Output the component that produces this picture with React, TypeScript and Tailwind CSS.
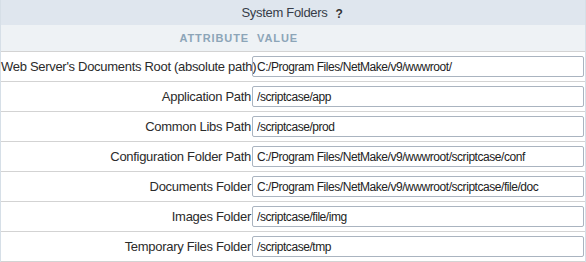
import React from 'react';

const folders = [
  { label: "Web Server's Documents Root (absolute path)", value: 'C:/Program Files/NetMake/v9/wwwroot/' },
  { label: 'Application Path', value: '/scriptcase/app' },
  { label: 'Common Libs Path', value: '/scriptcase/prod' },
  { label: 'Configuration Folder Path', value: 'C:/Program Files/NetMake/v9/wwwroot/scriptcase/conf' },
  { label: 'Documents Folder', value: 'C:/Program Files/NetMake/v9/wwwroot/scriptcase/file/doc' },
  { label: 'Images Folder', value: '/scriptcase/file/img' },
  { label: 'Temporary Files Folder', value: '/scriptcase/tmp' },
];

export default function App() {
  return (
    <div className="w-[586px] h-[262px] bg-white font-['Liberation_Sans',Arial,sans-serif] overflow-hidden">
      <div className="border-x border-[#d6dfe7]">
        {/* Titulo */}
        <div className="h-[25px] bg-[#dfe6ee] flex items-center justify-center gap-[8px] text-[13px] tracking-[-0.3px] text-[#363c48]">
          <span className="ml-[-2px]">System Folders</span>
          <span className="font-bold text-[12px] text-[#333] mt-[2px]">?</span>
        </div>

        {/* Cabecalho */}
        <div className="h-[27px] bg-[#eef2f5] grid grid-cols-[251px_1fr] items-center text-[11px] font-bold tracking-[0.9px] text-[#8ca5b8] border-b border-[#d3d3d3]">
          <span className="text-right pr-[3px]">ATTRIBUTE</span>
          <span className="pl-[5px]">VALUE</span>
        </div>

        {/* Linhas */}
        {folders.map((f) => (
          <div
            key={f.label}
            className="h-[30px] grid grid-cols-[251px_1fr] items-center border-b border-[#d3d3d3]"
          >
            <span className="text-right text-[13px] tracking-[-0.3px] text-[#2b2b2b] whitespace-nowrap pr-[1px]">{f.label}</span>
            <input
              readOnly
              value={f.value}
              className="h-[21px] mr-[1px] border border-[#aab4c0] rounded-[2px] px-[4px] text-[12px] tracking-[-0.45px] text-[#222] font-['Liberation_Sans',Arial,sans-serif] outline-none"
            />
          </div>
        ))}
      </div>
    </div>
  );
}
